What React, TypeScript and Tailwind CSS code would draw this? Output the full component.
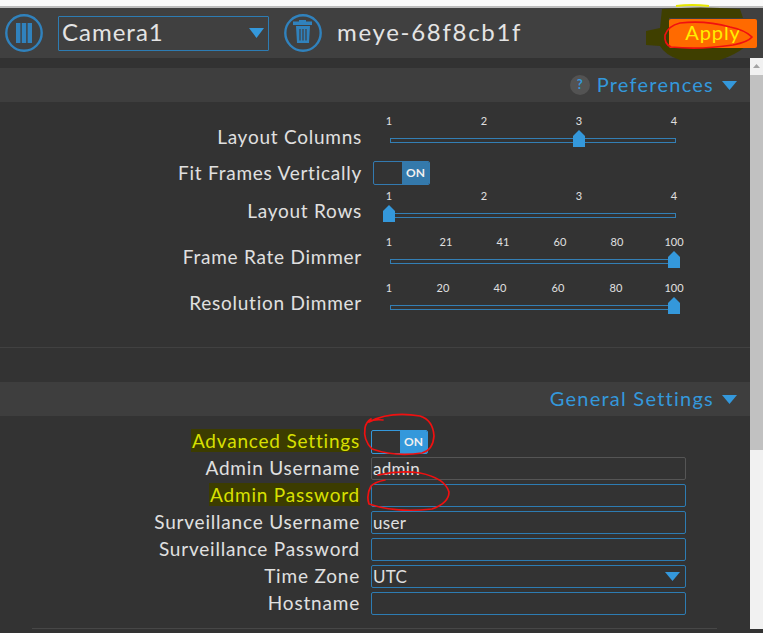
import React from "react";

const FONT = "font-['Lato','Open_Sans',sans-serif]";

const SLIDERS = {
  columns: { ticks: [["1", 0], ["2", 95], ["3", 190], ["4", 285]], handle: 190 },
  rows: { ticks: [["1", 0], ["2", 95], ["3", 190], ["4", 285]], handle: 0 },
  frameRate: { ticks: [["1", 0], ["21", 57], ["41", 114], ["60", 171], ["80", 228], ["100", 285]], handle: 285 },
  resolution: { ticks: [["1", 0], ["20", 54], ["40", 111], ["60", 169], ["80", 227], ["100", 285]], handle: 285 },
} as const;

const Slider: React.FC<{ config: { ticks: readonly (readonly [string, number])[]; handle: number } }> = ({ config }) => (
  <div className="relative h-[36px] w-[300px]">
    {config.ticks.map(([label, left]) => (
      <span
        key={label}
        className="absolute top-[1px] w-[30px] -translate-x-1/2 text-center text-[11px] leading-[14px] text-[#e0e0e0]"
        style={{ left: left + 4 }}
      >
        {label}
      </span>
    ))}
    <div className="absolute left-[5px] top-[25px] h-[5px] w-[286px] border border-[#337fb5]" />
    <svg
      className="absolute top-[17px]"
      style={{ left: config.handle - 2 }}
      width="12"
      height="17"
      viewBox="0 0 12 17"
    >
      <path d="M0 6 L6 0 L12 6 V17 H0 Z" fill="#3498db" />
    </svg>
  </div>
);

const Toggle: React.FC<{ bright?: boolean }> = ({ bright }) => (
  <div
    className={`flex h-[24px] w-[57px] overflow-hidden rounded-[2px] border ${
      bright ? "border-[#3498db]" : "border-[#337ab0]"
    }`}
  >
    <div className="w-[28px]" />
    <div
      className={`flex flex-1 items-center justify-center text-[12px] font-bold text-[#f0f0f0] ${
        bright ? "bg-[#3498db]" : "bg-[#3479ab]"
      }`}
    >
      ON
    </div>
  </div>
);

const SectionBar: React.FC<{ title: string; help?: boolean }> = ({ title, help }) => (
  <div className="flex h-[34px] items-center justify-end bg-[#3e3e3e] pr-[13px]">
    {help && (
      <span className="mr-[7px] flex h-[20px] w-[20px] items-center justify-center rounded-full bg-[#535353] text-[13px] font-bold text-[#3498db]">
        ?
      </span>
    )}
    <span className="pb-[2px] text-[20px] leading-[28px] tracking-[1.25px] text-[#3498db]">{title}</span>
    <svg className="ml-[8px]" width="15" height="9" viewBox="0 0 15 9">
      <path d="M0 0 H15 L7.5 9 Z" fill="#3498db" />
    </svg>
  </div>
);

const SliderRow: React.FC<{
  label: string;
  config: Parameters<typeof Slider>[0]["config"];
  tight?: boolean;
  className?: string;
}> = ({ label, config, tight, className }) => (
  <div className={`flex h-[36px] ${className ?? ""}`}>
    <div
      className={`w-[362px] text-right text-[19px] leading-[24px] tracking-[0.75px] text-[#e0e0e0] ${
        tight ? "pt-[11px]" : "pt-[12px]"
      }`}
    >
      {label}
    </div>
    <div className="ml-[23px]">
      <Slider config={config} />
    </div>
  </div>
);

const FormRow: React.FC<{ label: string; highlight?: boolean; children: React.ReactNode }> = ({
  label,
  highlight,
  children,
}) => (
  <div className="flex h-[23px] items-center">
    <div className="w-[360px] pb-[2px] text-right text-[19px] leading-[23px] tracking-[0.8px]">
      {highlight ? (
        <span className="inline-block bg-[#3c3c00] pl-[1px] text-[#d8e000]">{label}</span>
      ) : (
        <span className="text-[#e0e0e0]">{label}</span>
      )}
    </div>
    <div className="ml-[11px]">{children}</div>
  </div>
);

const TextField: React.FC<{ value?: string; muted?: boolean; arrow?: boolean }> = ({ value, muted, arrow }) => (
  <div
    className={`flex h-[23px] w-[315px] items-center justify-between rounded-[2px] border pl-[1px] pr-[4px] text-[17px] leading-[21px] tracking-[0.3px] text-[#e0e0e0] ${
      muted ? "border-[#555555]" : "border-[#2d7cb3]"
    }`}
  >
    <span>{value}</span>
    {arrow && (
      <svg className="mr-[1px]" width="15" height="9" viewBox="0 0 15 9">
        <path d="M0 0 H15 L7.5 9 Z" fill="#3498db" />
      </svg>
    )}
  </div>
);

const App: React.FC = () => {
  return (
    <div className={`relative h-[633px] w-[763px] overflow-hidden bg-[#333333] ${FONT}`}>
      {/* browser chrome strip */}
      <div className="h-[8px] border-b-2 border-[#bdbdbd] bg-[#fafafa]" />

      {/* top bar */}
      <div className="relative flex h-[50px] items-center bg-[#404040] pl-[5px]">
        <svg width="38" height="38" viewBox="0 0 38 38" className="shrink-0">
          <circle cx="19" cy="19" r="17.7" fill="none" stroke="#3082bd" strokeWidth="2.4" />
          <path d="M11 9 h4.4 v20 h-4.4 Z M16.8 9 h4.4 v20 h-4.4 Z M22.6 9 h4.4 v20 h-4.4 Z" fill="#3082bd" />
        </svg>
        <div className="ml-[15px] flex h-[35px] w-[211px] items-center justify-between rounded-[1px] border border-[#2d7cb3] pl-[3px] pr-[4px] text-[24px] leading-[32px] tracking-[1px] text-[#e4e4e4]">
          <span className="pb-[2px]">Camera1</span>
          <svg width="15" height="10" viewBox="0 0 15 10">
            <path d="M0 0 H15 L7.5 10 Z" fill="#3498db" />
          </svg>
        </div>
        <svg width="38" height="38" viewBox="0 0 38 38" className="ml-[15px] shrink-0">
          <circle cx="19" cy="19" r="17.7" fill="none" stroke="#3082bd" strokeWidth="2.4" />
          <path d="M15 7.5 V6 H22 V7.5 H28 V11 H9 V7.5 Z M12 12 H26 L25 29 H13 Z" fill="#3082bd" />
          <path d="M16 15 V26.5 M19 15 V26.5 M22 15 V26.5" stroke="#404040" strokeWidth="1.2" />
        </svg>
        <span className="ml-[15px] pb-[2px] text-[24px] leading-[32px] tracking-[1.7px] text-[#e4e4e4]">
          meye-68f8cb1f
        </span>

        {/* hand drawn highlight behind the button */}
        <svg className="absolute left-[640px] top-[-4px]" width="110" height="62" viewBox="640 4 110 62">
          <path
            d="M662 9 Q700 6 740 9 L743 18 H669 V47 H745 Q735 55 720 60 H680 Q665 55 660 46 L646 45 L646 31 L660 28 Z"
            fill="#3f3f00"
          />
          <path d="M676 6 Q692 4 709 6" stroke="#e8e800" strokeWidth="2" fill="none" />
        </svg>
        <div className="relative ml-auto mr-[6px] flex h-[29px] w-[88px] items-center justify-center rounded-[2px] bg-[#ff6a00] pb-[2px] text-[20px] leading-[26px] tracking-[0.9px] text-[#ffee00]">
          Apply
        </div>
      </div>

      <div className="flex">
        {/* settings */}
        <div className="w-[750px]">
          <div className="h-[10px] bg-[#323232]" />
          <SectionBar title="Preferences" help />
          <SliderRow label="Layout Columns" config={SLIDERS.columns} className="mt-[11px]" />
          <div className="mt-[12px] flex items-center">
            <div className="w-[362px] text-right text-[19px] leading-[24px] tracking-[0.75px] text-[#e0e0e0]">
              Fit Frames Vertically
            </div>
            <div className="ml-[11px]">
              <Toggle />
            </div>
          </div>
          <SliderRow label="Layout Rows" config={SLIDERS.rows} tight className="mt-[3px]" />
          <SliderRow label="Frame Rate Dimmer" config={SLIDERS.frameRate} tight className="mt-[10px]" />
          <SliderRow label="Resolution Dimmer" config={SLIDERS.resolution} tight className="mt-[10px]" />
          <div className="mt-[31px] h-px bg-[#414141]" />

          <div className="mt-[34px]">
            <SectionBar title="General Settings" />
          </div>
          <div className="mt-[14px] flex flex-col gap-[4px]">
            <FormRow label="Advanced Settings" highlight>
              <Toggle bright />
            </FormRow>
            <FormRow label="Admin Username">
              <TextField value="admin" muted />
            </FormRow>
            <FormRow label="Admin Password" highlight>
              <TextField />
            </FormRow>
            <FormRow label="Surveillance Username">
              <TextField value="user" />
            </FormRow>
            <FormRow label="Surveillance Password">
              <TextField />
            </FormRow>
            <FormRow label="Time Zone">
              <TextField value="UTC" arrow />
            </FormRow>
            <FormRow label="Hostname">
              <TextField />
            </FormRow>
          </div>
          <div className="ml-[32px] mt-[13px] h-px w-[685px] bg-[#474747]" />
        </div>

        {/* scrollbar */}
        <div className="flex w-[13px] flex-col bg-[#f1f1f1]">
          <div className="flex h-[17px] items-start justify-center pt-[6px]">
            <svg width="7" height="4" viewBox="0 0 7 4">
              <path d="M3.5 0 L7 4 H0 Z" fill="#a3a3a3" />
            </svg>
          </div>
          <div className="h-[375px] bg-[#c1c1c1]" />
        </div>
      </div>

      {/* red pen annotations */}
      <svg className="pointer-events-none absolute inset-0" width="763" height="633" viewBox="0 0 763 633" fill="none">
        <g stroke="#f01010" strokeWidth="1.7" strokeLinecap="round" strokeLinejoin="round">
          <path d="M680 23 Q668 26 665 35 Q664 44 671 47 Q700 50 733 45 Q748 42 752 37 Q745 30 730 27 Q705 20 680 23" />
          <path d="M383 420 Q374 419 369 422 Q390 411 420 416 Q433 420 434 436 Q433 450 422 453 Q395 457 372 449 Q363 440 365 428 Q366 422 371 419" />
          <path d="M385 480 Q375 482 371 486 Q366 495 369 504 Q395 513 432 509 Q449 503 449 492 Q445 478 420 473 Q400 470 378 475" />
        </g>
      </svg>
    </div>
  );
};

export default App;
